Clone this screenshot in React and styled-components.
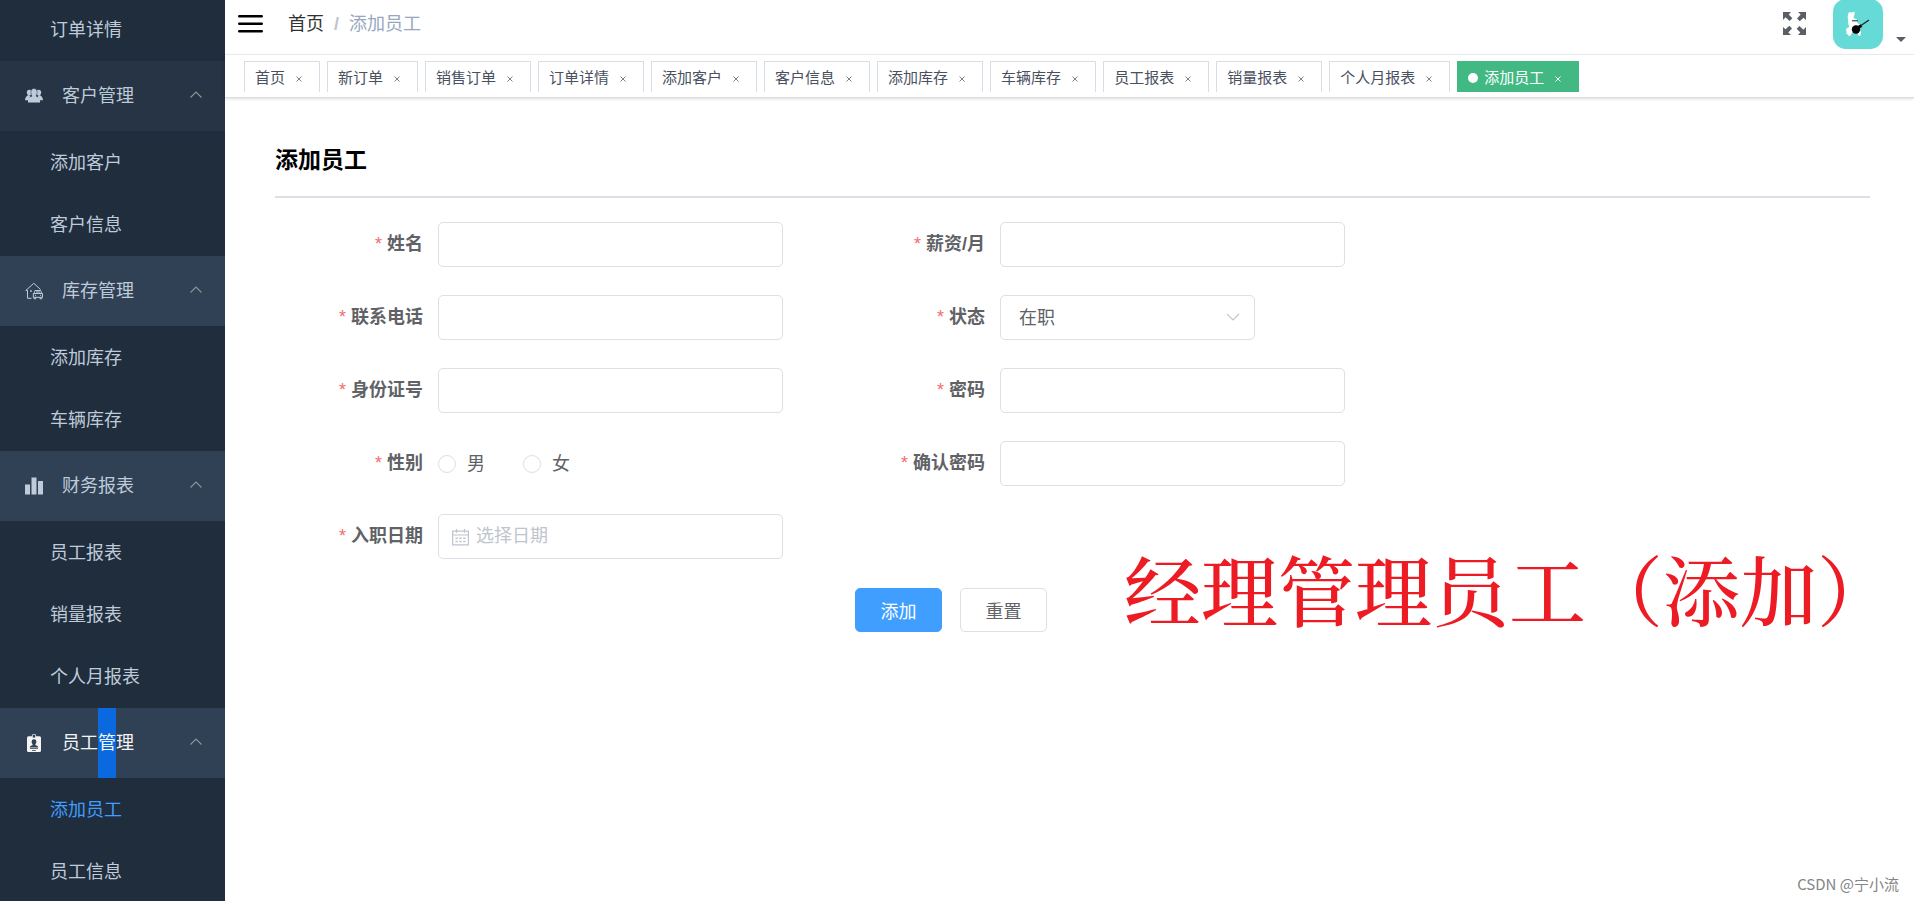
import React, { useState } from "react";
import styled, { createGlobalStyle } from "styled-components";

const GlobalStyle = createGlobalStyle`
  * {
    box-sizing: border-box;
  }

  body {
    margin: 0;
    background: #fff;
    font-size: 18px;
  }

  body, input, button, select {
    font-family: "Liberation Sans", "Noto Sans CJK SC", sans-serif;
  }
`;

const Layout = styled.div`
  position: relative;
  display: flex;
  height: 100vh;
  overflow: hidden;
`;

const Sidebar = styled.nav`
  flex: none;
  width: 225px;
  overflow: hidden;
  background: #304156;
`;

const GroupTitle = styled.button`
  display: flex;
  align-items: center;
  width: 100%;
  height: 70px;
  padding: 0 22px 0 25px;
  border: none;
  background: ${({ $hover }) => ($hover ? "#263445" : "#304156")};
  color: ${({ $light }) => ($light ? "#f4f4f5" : "#bfcbd9")};
  font-size: 18px;
  line-height: 70px;
  text-align: left;
  cursor: pointer;

  & svg {
    flex: none;
  }

  & > span {
    flex: 1;
    margin-left: 19px;
  }
`;

const Marked = styled.mark`
  display: inline-block;
  background: #0a69df;
  color: inherit;
`;

const SubMenu = styled.ul`
  display: flex;
  flex-direction: column;
  justify-content: flex-end;
  height: ${({ $scrolled }) => ($scrolled ? "61px" : "auto")};
  margin: 0;
  padding: 0 0 1px;
  overflow: hidden;
  background: #1f2d3d;
  list-style: none;
`;

const SubLink = styled.a`
  display: block;
  height: 62px;
  padding-left: 50px;
  color: ${({ $active }) => ($active ? "#409eff" : "#bfcbd9")};
  line-height: 64px;
  text-decoration: none;
`;

const Page = styled.div`
  display: flex;
  flex: 1;
  flex-direction: column;
  min-width: 0;
`;

const Navbar = styled.header`
  display: flex;
  align-items: center;
  height: 55px;
  padding: 0 8px 7px 13px;
  border-bottom: 1px solid #f0f1f2;
`;

const IconButton = styled.button`
  display: flex;
  padding: 0;
  border: none;
  background: none;
  color: ${({ $color }) => $color || "#000"};
  cursor: pointer;
`;

const Breadcrumb = styled.div`
  display: flex;
  flex: 1;
  align-items: center;
  gap: 10px;
  margin-left: 25px;
  color: #97a8be;
  line-height: 24px;

  & a {
    color: #303133;
    text-decoration: none;
  }

  & i {
    color: #c0c4cc;
    font-style: normal;
    font-weight: bold;
  }
`;

const UserMenu = styled.button`
  display: flex;
  align-items: flex-end;
  gap: 13px;
  margin-left: 27px;
  padding: 0;
  border: none;
  background: none;
  cursor: pointer;
`;

const Caret = styled.span`
  margin-bottom: 7px;
  border: 5px solid transparent;
  border-top-color: #5a5e66;
  border-bottom: none;
`;

const TagsBar = styled.div`
  display: flex;
  gap: 7px;
  height: 43px;
  padding: 6px 19px 5px;
  border-bottom: 1px solid #d8dce5;
  box-shadow: 0 1px 3px rgba(0, 0, 0, 0.12), 0 0 3px rgba(0, 0, 0, 0.04);
`;

const Tag = styled.div`
  display: flex;
  align-items: center;
  height: 31px;
  padding: 1px 10px 0;
  border: 1px solid ${({ $active }) => ($active ? "#42b983" : "#d8dce5")};
  border-bottom: none;
  background: ${({ $active }) => ($active ? "#42b983" : "#fff")};
  white-space: nowrap;

  &::before {
    content: "";
    display: ${({ $active }) => ($active ? "block" : "none")};
    width: 10px;
    height: 10px;
    margin-right: 6px;
    border-radius: 50%;
    background: #fff;
  }

  & a {
    color: ${({ $active }) => ($active ? "#fff" : "#495060")};
    font-size: 15px;
    line-height: 30px;
    text-decoration: none;
  }

  & button {
    display: flex;
    align-items: center;
    justify-content: center;
    width: 20px;
    height: 20px;
    margin-left: 4px;
    padding: 2px 0 0;
    border: none;
    background: none;
    color: ${({ $active }) => ($active ? "#fff" : "#7c828c")};
    cursor: pointer;
  }
`;

const Main = styled.main`
  flex: 1;
  padding: 44px 44px 0 50px;
`;

const Title = styled.h3`
  margin: 0;
  padding-bottom: 18px;
  border-bottom: 2px solid #dcdfe6;
  color: #000;
  font-size: 23px;
  line-height: 36px;
`;

const Form = styled.form`
  padding-top: 24px;
`;

const Fields = styled.div`
  display: flex;
  gap: 54px;
`;

const Column = styled.div`
  display: grid;
  grid-template-columns: 163px 345px;
  grid-auto-rows: 45px;
  row-gap: 28px;
  align-content: start;
  align-items: center;
`;

const Label = styled.label`
  align-self: start;
  padding-right: 15px;
  color: #606266;
  font-weight: bold;
  line-height: 44px;
  text-align: right;

  &::before {
    content: "*";
    margin-right: 5px;
    color: #f56c6c;
    font-weight: normal;
  }
`;

const Input = styled.input`
  width: 100%;
  height: 45px;
  padding: 0 18px 0 ${({ $icon }) => ($icon ? "37px" : "18px")};
  border: 1px solid #dcdfe6;
  border-radius: 5px;
  outline: none;
  background: #fff;
  color: #606266;
  font-size: 18px;

  &::placeholder {
    color: #c0c4cc;
    opacity: 1;
  }

  &:focus {
    border-color: #409eff;
  }
`;

const Select = styled.select`
  width: 100%;
  height: 45px;
  padding: 0 18px;
  border: 1px solid #dcdfe6;
  border-radius: 5px;
  outline: none;
  appearance: none;
  background: #fff;
  color: #606266;
  font-size: 18px;
`;

const Control = styled.div`
  position: relative;
  width: ${({ $width }) => $width || "100%"};
  color: #c0c4cc;

  & svg {
    position: absolute;
    top: 15px;
    ${({ $side }) => $side || "left"}: 14px;
    pointer-events: none;
  }
`;

const RadioGroup = styled.div`
  display: flex;
  gap: 38px;

  & label {
    display: flex;
    align-items: center;
    gap: 11px;
    color: #606266;
    line-height: 24px;
  }

  & input {
    width: 18px;
    height: 18px;
    margin: 0;
    border: 1px solid #dcdfe6;
    border-radius: 50%;
    appearance: none;
    background: #fff;
  }

  & input:checked {
    border: 6px solid #409eff;
  }
`;

const Actions = styled.div`
  display: flex;
  gap: 18px;
  margin-top: 29px;
  padding-left: 580px;
`;

const Button = styled.button`
  width: 87px;
  height: 44px;
  padding: 0;
  border: 1px solid ${({ $primary }) => ($primary ? "#409eff" : "#dcdfe6")};
  border-radius: 5px;
  background: ${({ $primary }) => ($primary ? "#409eff" : "#fff")};
  color: ${({ $primary }) => ($primary ? "#fff" : "#606266")};
  font-size: 18px;
  cursor: pointer;
`;

const Caption = styled.p`
  position: absolute;
  top: 532px;
  right: 20px;
  margin: 0;
  color: #ed1c24;
  font-family: "Noto Serif CJK SC", "Noto Sans CJK SC", serif;
  font-size: 77px;
  font-weight: 500;
  line-height: 112px;
  white-space: nowrap;
`;

const Watermark = styled.p`
  position: absolute;
  right: 15px;
  bottom: 5px;
  margin: 0;
  color: #858585;
  font-family: "Noto Sans CJK SC", sans-serif;
  font-size: 15px;
  line-height: 24px;
`;

const PeopleIcon = () => (
  <svg width="18" height="18" viewBox="0 0 18 18" fill="currentColor">
    <circle cx="4.4" cy="5.4" r="2.6" />
    <circle cx="13.6" cy="5.4" r="2.6" />
    <path d="M0 13.2C0 10.4 1.6 9 3.4 8l2 .6-1.6 4.6zM18 13.2c0-2.8-1.6-4.2-3.4-5.2l-2 .6 1.6 4.6z" />
    <ellipse cx="9" cy="5.4" rx="3.2" ry="4" stroke="#263445" strokeWidth=".5" />
    <path d="M3 15.4v-2c0-2.4 1.6-3.4 4.2-4.2V8h3.6v1.2c2.6.8 4.2 1.8 4.2 4.2v2z" />
  </svg>
);

const HouseIcon = () => (
  <svg width="18" height="18" viewBox="0 0 18 18" fill="none" stroke="currentColor" strokeWidth="1">
    <path d="M2.5 8.5H.8L8.8 1.3l6.8 6.2M2.5 8.5v7.8h4M6 8.2v1.6M5.2 9h1.6" />
    <path d="M9 11.5l1-3h5.6l1.2 3M8.3 11.5h9.2v3.8H8.3zM9 15.3v1.5h1.8v-1.5M15 15.3v1.5h1.8v-1.5M10 13.3h1M15 13.3h1M11 10h4" />
  </svg>
);

const ChartIcon = () => (
  <svg width="18" height="18" viewBox="0 0 18 18" fill="currentColor">
    <path d="M0 7.5h5v10H0zM6.5.5h5v17h-5zM13 4h5v13.5h-5z" />
  </svg>
);

const BadgeIcon = () => (
  <svg width="18" height="18" viewBox="0 0 18 18" fill="currentColor">
    <path d="M3.5 2.2h11q1.5 0 1.5 1.5V16.5q0 1.5-1.5 1.5h-11Q2 18 2 16.5V3.7q0-1.5 1.5-1.5z" />
    <path d="M7.3 4V1.8a1.7 1.7 0 0 1 3.4 0V4z" fill="#304156" stroke="currentColor" strokeWidth=".9" />
    <path
      d="M9 5.3a2.4 2.4 0 0 1 2.4 2.4c0 1.2-.6 1.9-1 2.4v1.2c1.5.4 2.8.8 2.8 2.3H4.800c0-1.500 1.300-1.900 2.800-2.300v-1.200c-.4-.5-1-1.200-1-2.400A2.400 2.400 0 0 1 9 5.300zM5 14.300h8v.8H5zM7 16h4v.8H7z"
      fill="#304156"
    />
  </svg>
);

const Chevron = ({ down }) => (
  <svg width="14" height="14" viewBox="0 0 14 14" fill="none" stroke={down ? "#c0c4cc" : "#909399"} strokeWidth="1.1">
    <path d={down ? "M0 4l6 6 6-6" : "M1.5 8.5L7 3l5.5 5.5"} />
  </svg>
);

const MenuIcon = () => (
  <svg width="25" height="20" viewBox="0 0 25 20" stroke="currentColor" strokeWidth="2.6" strokeLinecap="round">
    <path d="M1.3 2.3h22.4M1.3 9.8h22.4M1.3 17.3h22.4" />
  </svg>
);

const ExpandIcon = () => (
  <svg width="23" height="23" viewBox="0 0 23 23" fill="currentColor">
    {[0, 90, 180, 270].map((angle) => (
      <path
        key={angle}
        transform={`rotate(${angle} 11.5 11.5)`}
        d="M0 0h8L5.7 2.5l3.6 3.8L6.6 9l-4-3.7L0 8z"
      />
    ))}
  </svg>
);

const CloseIcon = () => (
  <svg width="6" height="6" viewBox="0 0 6 6" stroke="currentColor" strokeWidth="1">
    <path d="M.5.5l5 5M5.5.5l-5 5" />
  </svg>
);

const CalendarIcon = () => (
  <svg width="17" height="17" viewBox="0 0 17 17" fill="none" stroke="currentColor" strokeWidth="1.2">
    <path d="M.6 2.2h15.800v13.700H.6zM.6 6h15.800M4.500 0v3.800M12.500 0v3.800" />
    <path
      d="M3.5 9.3h2.3M7.3 9.3h2.3M11.2 9.3h2.3M3.5 12.5h2.3M7.3 12.5h2.3M11.2 12.5h2.3"
      strokeWidth="1.5"
    />
  </svg>
);

const Avatar = () => (
  <svg width="50" height="50" viewBox="0 0 50 50">
    <rect width="50" height="50" rx="13" fill="#66dad6" />
    <path
      d="M15 20.5c-.6-3-.2-6 1.2-7.5l2 .8L20 12.700l1.800.6-.6 3.200-.9 2.700c2.400.2 4 1 4.300 2.600l-.4 2.200 3.400 2 .8 2-1.800 1.500 1.400 4-.8 3.500-2-.5-1.200-3.500-4.600-.5-1.600 3.800-1.800.9-1.200-1.700-1.400-.8.4-2-1.100-1.500 1.600-2.400 2-.8-1-3z"
      fill="#fff"
    />
    <circle cx="23" cy="30.5" r="4.2" />
    <path d="M24 29l4.5-2.3" stroke="#000" strokeWidth="3" />
    <path d="M28 26.5l8-5.5" stroke="#222" strokeWidth="1.3" />
    <path d="M19 21.8h6" stroke="#222" strokeWidth="1" />
  </svg>
);

const menu = [
  { key: "order", items: ["订单详情"], scrolled: true },
  { key: "customer", title: "客户管理", icon: <PeopleIcon />, hover: true, items: ["添加客户", "客户信息"] },
  { key: "stock", title: "库存管理", icon: <HouseIcon />, items: ["添加库存", "车辆库存"] },
  { key: "finance", title: "财务报表", icon: <ChartIcon />, items: ["员工报表", "销量报表", "个人月报表"] },
  {
    key: "staff",
    title: (
      <>
        员工<Marked>管</Marked>理
      </>
    ),
    icon: <BadgeIcon />,
    light: true,
    items: ["添加员工", "员工信息"],
  },
];

const tags = [
  "首页",
  "新订单",
  "销售订单",
  "订单详情",
  "添加客户",
  "客户信息",
  "添加库存",
  "车辆库存",
  "员工报表",
  "销量报表",
  "个人月报表",
  "添加员工",
];

const current = "添加员工";

const StaffForm = () => {
  const [gender, setGender] = useState("");

  return (
    <Form onSubmit={(e) => e.preventDefault()} onReset={() => setGender("")}>
      <Fields>
        <Column>
          <Label htmlFor="name">姓名</Label>
          <Input id="name" />
          <Label htmlFor="phone">联系电话</Label>
          <Input id="phone" />
          <Label htmlFor="idCard">身份证号</Label>
          <Input id="idCard" />
          <Label as="span" id="gender">
            性别
          </Label>
          <RadioGroup role="radiogroup" aria-labelledby="gender">
            {["男", "女"].map((value) => (
              <label key={value}>
                <input
                  type="radio"
                  name="gender"
                  checked={gender === value}
                  onChange={() => setGender(value)}
                />
                {value}
              </label>
            ))}
          </RadioGroup>
          <Label htmlFor="entryDate">入职日期</Label>
          <Control>
            <Input id="entryDate" placeholder="选择日期" $icon />
            <CalendarIcon />
          </Control>
        </Column>
        <Column>
          <Label htmlFor="salary">薪资/月</Label>
          <Input id="salary" />
          <Label htmlFor="status">状态</Label>
          <Control $width="255px" $side="right">
            <Select id="status" defaultValue="在职">
              <option>在职</option>
              <option>离职</option>
            </Select>
            <Chevron down />
          </Control>
          <Label htmlFor="password">密码</Label>
          <Input id="password" type="password" />
          <Label htmlFor="confirm">确认密码</Label>
          <Input id="confirm" type="password" />
        </Column>
      </Fields>
      <Actions>
        <Button type="submit" $primary>
          添加
        </Button>
        <Button type="reset">重置</Button>
      </Actions>
    </Form>
  );
};

const App = () => {
  return (
    <Layout>
      <GlobalStyle />
      <Sidebar>
        {menu.map((group) => (
          <React.Fragment key={group.key}>
            {group.title && (
              <GroupTitle type="button" $hover={group.hover} $light={group.light}>
                {group.icon}
                <span>{group.title}</span>
                <Chevron />
              </GroupTitle>
            )}
            <SubMenu $scrolled={group.scrolled}>
              {group.items.map((item) => (
                <li key={item}>
                  <SubLink href="#" $active={item === current}>
                    {item}
                  </SubLink>
                </li>
              ))}
            </SubMenu>
          </React.Fragment>
        ))}
      </Sidebar>
      <Page>
        <Navbar>
          <IconButton type="button" aria-label="折叠菜单">
            <MenuIcon />
          </IconButton>
          <Breadcrumb>
            <a href="#">首页</a>
            <i>/</i>
            <span>{current}</span>
          </Breadcrumb>
          <IconButton type="button" aria-label="全屏" $color="#5a5e66">
            <ExpandIcon />
          </IconButton>
          <UserMenu type="button" aria-label="用户菜单">
            <Avatar />
            <Caret />
          </UserMenu>
        </Navbar>
        <TagsBar>
          {tags.map((tag) => (
            <Tag key={tag} $active={tag === current}>
              <a href="#">{tag}</a>
              <button type="button" aria-label={`关闭${tag}`}>
                <CloseIcon />
              </button>
            </Tag>
          ))}
        </TagsBar>
        <Main>
          <Title>添加员工</Title>
          <StaffForm />
        </Main>
      </Page>
      <Caption>经理管理员工（添加）</Caption>
      <Watermark>CSDN @宁小流</Watermark>
    </Layout>
  );
};

export default App;
